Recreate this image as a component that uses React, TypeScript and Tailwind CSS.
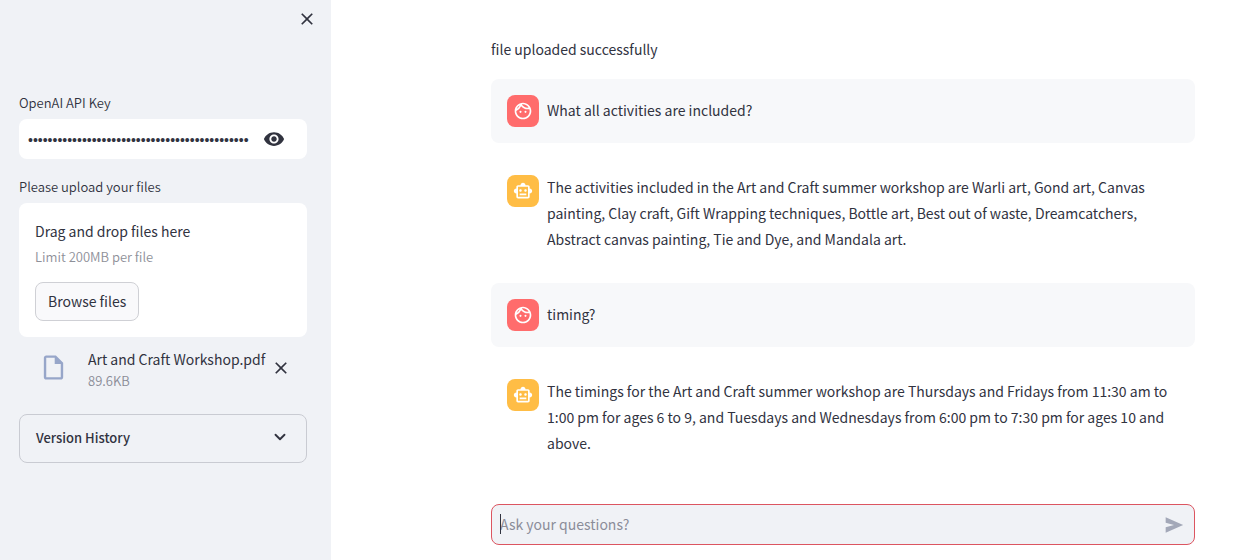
import { useState } from "react";
import type { ReactNode } from "react";
import {
  MdClose,
  MdOutlineFace,
  MdOutlineInsertDriveFile,
  MdOutlineSmartToy,
  MdVisibility,
} from "react-icons/md";
import { ChevronDown } from "lucide-react";

type Message = { role: "user" | "assistant"; text: string };

const messages: Message[] = [
  { role: "user", text: "What all activities are included?" },
  {
    role: "assistant",
    text: "The activities included in the Art and Craft summer workshop are Warli art, Gond art, Canvas painting, Clay craft, Gift Wrapping techniques, Bottle art, Best out of waste, Dreamcatchers, Abstract canvas painting, Tie and Dye, and Mandala art.",
  },
  { role: "user", text: "timing?" },
  {
    role: "assistant",
    text: "The timings for the Art and Craft summer workshop are Thursdays and Fridays from 11:30 am to 1:00 pm for ages 6 to 9, and Tuesdays and Wednesdays from 6:00 pm to 7:30 pm for ages 10 and above.",
  },
];

function SendIcon() {
  return (
    <svg width="20" height="20" viewBox="0 0 24 24" fill="currentColor" aria-hidden="true">
      <path d="M2 2.8 23 12 2 21.2v-6.4L12 12 2 9.2z" />
    </svg>
  );
}

function Avatar({ color, children }: { color: string; children: ReactNode }) {
  return (
    <div className={`flex size-8 shrink-0 items-center justify-center rounded-lg text-white ${color}`}>
      {children}
    </div>
  );
}

function ChatMessage({ role, text }: Message) {
  const isUser = role === "user";
  return (
    <article className={`flex items-start gap-2 rounded-lg px-4 ${isUser ? "bg-[#f7f8fa] py-4" : "pt-4 pb-[15px]"}`}>
      {isUser ? (
        <Avatar color="bg-[#ff6c6c]">
          <MdOutlineFace size={20} />
        </Avatar>
      ) : (
        <Avatar color="bg-[#ffbd45]">
          <MdOutlineSmartToy size={20} />
        </Avatar>
      )}
      <p className={`min-w-0 flex-1 leading-[26px] ${isUser ? "pt-0.5" : "-mt-px"}`}>{text}</p>
    </article>
  );
}

function Sidebar() {
  const [apiKey, setApiKey] = useState("k".repeat(45));
  const [visible, setVisible] = useState(false);
  return (
    <aside className="flex w-[331px] shrink-0 flex-col bg-[#f0f2f6] pr-6 pl-[19px]">
      <div className="-mr-3 flex h-[93px] items-start justify-end pt-[7px]">
        <button type="button" aria-label="Close sidebar" className="flex size-6 items-center justify-center">
          <MdClose size={20} />
        </button>
      </div>

      <label htmlFor="api-key" className="text-[13px] leading-5 font-[350]">
        OpenAI API Key
      </label>
      <div className="mt-1.5 flex h-10 items-center rounded-lg bg-white pr-[22px] pl-[9px]">
        <input
          id="api-key"
          type={visible ? "text" : "password"}
          value={apiKey}
          onChange={(e) => setApiKey(e.target.value)}
          className="mt-0.5 min-w-0 flex-1 bg-transparent font-['Liberation_Sans',sans-serif] text-sm outline-none"
        />
        <button
          type="button"
          aria-label="Show password text"
          onClick={() => setVisible(!visible)}
          className="ml-3.5 flex shrink-0 items-center"
        >
          <MdVisibility size={22} />
        </button>
      </div>

      <p className="mt-[18px] text-[13px] leading-5 font-[350]">Please upload your files</p>
      <section className="mt-1.5 rounded-lg bg-white p-4">
        <p className="leading-6">Drag and drop files here</p>
        <p className="mt-1 text-[13px] leading-5 font-[350] text-[#8e9099]">Limit 200MB per file</p>
        <button
          type="button"
          className="mt-[15px] block h-[39px] rounded-lg border border-[#cfd0d5] bg-[#f9f9fb] px-3 pb-0.5"
        >
          Browse files
        </button>
      </section>

      <div className="mt-2.5 flex items-center pr-4 pl-5">
        <MdOutlineInsertDriveFile size={29} className="mb-1 shrink-0 text-[#97a6c9]" />
        <div className="ml-5 min-w-0 flex-1 whitespace-nowrap">
          <p className="leading-6">Art and Craft Workshop.pdf</p>
          <p className="text-[13px] leading-5 font-[350] text-[#8a8c96]">89.6KB</p>
        </div>
        <button type="button" aria-label="Remove file" className="mb-0.5 flex shrink-0 items-center">
          <MdClose size={20} />
        </button>
      </div>

      <button
        type="button"
        aria-expanded="false"
        className="mt-[23px] flex h-[49px] items-center justify-between rounded-lg border border-[#c9cbd2] pr-[17px] pl-4 text-[13px] font-medium"
      >
        Version History
        <ChevronDown size={18} strokeWidth={2.5} className="mb-1" />
      </button>
    </aside>
  );
}

export default function App() {
  const [question, setQuestion] = useState("");
  return (
    <div className="flex min-h-screen bg-white font-['Noto_Sans_CJK_SC',sans-serif] text-sm text-[#31333f]">
      <Sidebar />
      <main className="flex min-w-0 flex-1 flex-col pt-9 pr-[65px] pb-[15px] pl-40">
        <p className="leading-[26px]">file uploaded successfully</p>
        <div className="mt-[17px] flex flex-col gap-4">
          {messages.map((m) => (
            <ChatMessage key={m.text} {...m} />
          ))}
        </div>
        <form
          onSubmit={(e) => e.preventDefault()}
          className="mt-auto flex h-[41px] items-center rounded-lg border border-[#dc5560] bg-[#f0f2f6] pr-2.5 pl-2"
        >
          <div className="relative flex min-w-0 flex-1">
            {question === "" && (
              <span aria-hidden="true" className="absolute top-0 left-0 h-5 w-px bg-[#31333f]" />
            )}
            <input
              type="text"
              aria-label="Ask your questions?"
              placeholder="Ask your questions?"
              value={question}
              onChange={(e) => setQuestion(e.target.value)}
              className="mb-0.5 min-w-0 flex-1 bg-transparent outline-none placeholder:text-[#8b8d99]"
            />
          </div>
          <button type="submit" aria-label="Send" className="flex items-center text-[#a3a8b8]">
            <SendIcon />
          </button>
        </form>
      </main>
    </div>
  );
}
